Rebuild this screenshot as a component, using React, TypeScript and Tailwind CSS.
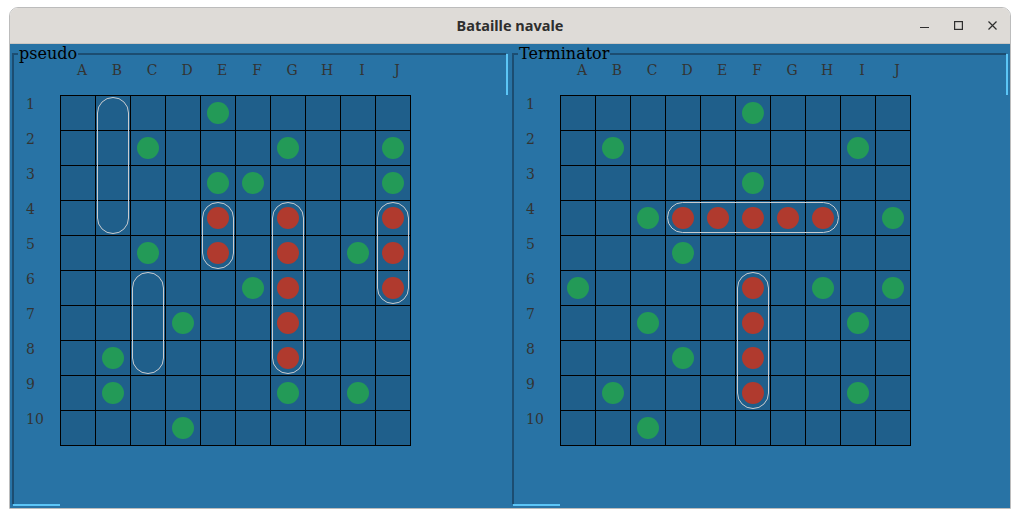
import React from "react";

const COLS = ["A", "B", "C", "D", "E", "F", "G", "H", "I", "J"];

type Ship = { col: string; row: number; len: number; horizontal?: boolean };

type Board = {
  name: string;
  hits: string[];
  misses: string[];
  ships: Ship[];
};

const BOARDS: Board[] = [
  {
    name: "pseudo",
    misses: ["E1", "C2", "G2", "J2", "E3", "F3", "J3", "C5", "I5", "F6", "D7", "B8", "B9", "G9", "I9", "D10"],
    hits: ["E4", "G4", "J4", "E5", "G5", "J5", "G6", "J6", "G7", "G8"],
    ships: [
      { col: "B", row: 1, len: 4 },
      { col: "E", row: 4, len: 2 },
      { col: "G", row: 4, len: 5 },
      { col: "J", row: 4, len: 3 },
      { col: "C", row: 6, len: 3 },
    ],
  },
  {
    name: "Terminator",
    misses: ["F1", "B2", "I2", "F3", "C4", "J4", "D5", "A6", "H6", "J6", "C7", "I7", "D8", "B9", "I9", "C10"],
    hits: ["D4", "E4", "F4", "G4", "H4", "F6", "F7", "F8", "F9"],
    ships: [
      { col: "D", row: 4, len: 5, horizontal: true },
      { col: "F", row: 6, len: 4 },
    ],
  },
];

const serif = { fontFamily: '"DejaVu Serif", "Liberation Serif", serif' };

function Grid({ board }: { board: Board }) {
  const cells = [];
  for (let r = 1; r <= 10; r++) {
    for (const c of COLS) {
      const key = `${c}${r}`;
      const hit = board.hits.includes(key);
      const miss = board.misses.includes(key);
      cells.push(
        <div key={key} className="w-[35px] h-[35px] border-r border-b border-black bg-[#1f5f8b] flex items-center justify-center">
          {hit && <div className="w-[22px] h-[22px] rounded-full bg-[#b03a2e]" />}
          {miss && <div className="w-[22px] h-[22px] rounded-full bg-[#239a57]" />}
        </div>
      );
    }
  }

  return (
    <div className="relative border-l border-t border-black grid grid-cols-[repeat(10,35px)]">
      {cells}
      {board.ships.map((s, i) => {
        const ci = COLS.indexOf(s.col);
        const w = s.horizontal ? 35 * s.len - 3 : 32;
        const h = s.horizontal ? 31 : 35 * s.len - 3;
        return (
          <div
            key={i}
            className="absolute rounded-full border border-[#c9ccd0]"
            style={{ left: 35 * ci + 1, top: 35 * (s.row - 1) + 1, width: w, height: h }}
          />
        );
      })}
    </div>
  );
}

function Panel({ board }: { board: Board }) {
  return (
    <div className="flex w-[500px] pl-[2px] pt-[9px]">
      <div className="flex flex-col w-[494px]">
        <div className="relative h-[451px] border-l-2 border-t-2 border-[#1c4d71]">
          <span
            className="absolute left-[4px] -top-[10px] px-[1px] bg-[#2873a5] text-[16px] leading-[18px] text-black"
            style={serif}
          >
            {board.name}
          </span>
          <div className="flex mt-[7px] pl-[46px] text-[14px] leading-[16px] text-[#333]" style={serif}>
            {COLS.map((c) => (
              <div key={c} className="w-[35px] pl-[9px] text-center">
                {c}
              </div>
            ))}
          </div>
          <div className="flex mt-[17px]">
            <div className="w-[46px] pl-[12px] text-[14px] leading-[16px] text-[#333]" style={serif}>
              {Array.from({ length: 10 }, (_, i) => (
                <div key={i} className="h-[35px] pt-[1px]">
                  {i + 1}
                </div>
              ))}
            </div>
            <Grid board={board} />
          </div>
        </div>
        <div className="h-[2px] w-[47px] ml-[1px] bg-[#5cc6f7]" />
      </div>
      <div className="w-[2px] h-[41px] mt-[1px] bg-[#5cc6f7]" />
    </div>
  );
}

export default function App() {
  return (
    <div className="w-[1020px] h-[518px] bg-white">
      <div className="ml-[9px] mt-[7px] w-[1002px] h-[502px] border border-[#bcbcbc] rounded-t-[9px] flex flex-col overflow-hidden">
        <div className="h-[36px] bg-[#dedbd7] border-b border-[#cbc7c3] flex items-center relative">
          <div
            className="flex-1 text-center text-[14.5px] font-bold text-[#2e2e2e]"
            style={{ fontFamily: '"Noto Sans", "DejaVu Sans", sans-serif' }}
          >
            Bataille navale
          </div>
          <div className="absolute right-[13px] top-0 h-full flex items-center gap-[25px]">
            <svg width="9" height="9" viewBox="0 0 9 9">
              <line x1="0" y1="6.5" x2="9" y2="6.5" stroke="#2e2e2e" strokeWidth="1.2" />
            </svg>
            <svg width="9" height="9" viewBox="0 0 9 9">
              <rect x="0.6" y="0.6" width="7.8" height="7.8" fill="none" stroke="#2e2e2e" strokeWidth="1.2" />
            </svg>
            <svg width="9" height="9" viewBox="0 0 9 9">
              <path d="M0.5 0.5 L8.5 8.5 M8.5 0.5 L0.5 8.5" stroke="#2e2e2e" strokeWidth="1.2" />
            </svg>
          </div>
        </div>
        <div className="flex-1 bg-[#2873a5] flex">
          {BOARDS.map((b) => (
            <Panel key={b.name} board={b} />
          ))}
        </div>
      </div>
    </div>
  );
}
